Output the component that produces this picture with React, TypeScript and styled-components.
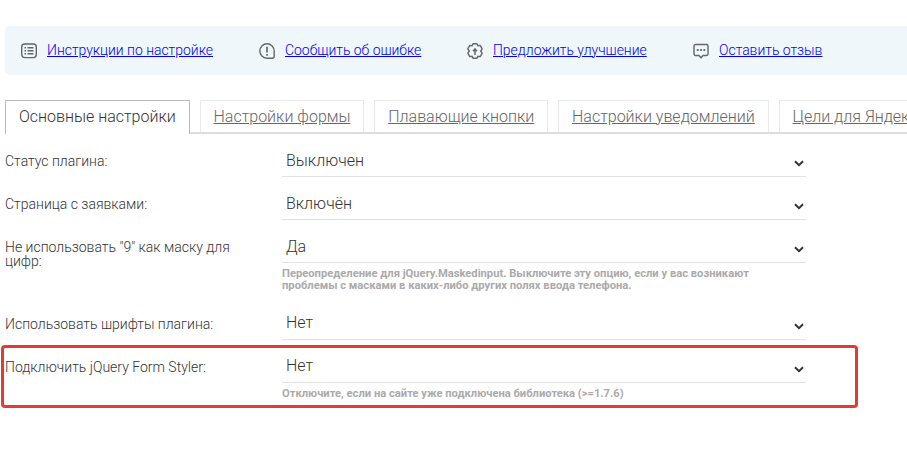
import React from "react";
import styled, { createGlobalStyle } from "styled-components";

const Global = createGlobalStyle`
  html, body { margin: 0; padding: 0; background: #fff; }
  body { font-family: Roboto, "Liberation Sans", sans-serif; width: 907px; height: 463px; overflow: hidden; }
`;
const Page = styled.div`
  width: 907px; height: 463px; overflow: hidden; padding: 26px 0 0 5px; box-sizing: border-box;
`;
const Notice = styled.div`
  display: flex; align-items: center; height: 49px; width: 920px; box-sizing: border-box;
  background: #eff7fb; border-radius: 5px; padding-left: 16px;
`;
const NoticeItem = styled.div<{ $w: number }>`
  display: flex; align-items: center; gap: 10px; width: ${p => p.$w}px; flex: none;
`;
const NoticeLink = styled.a`
  font-size: 13.95px; font-weight: 300; color: #0000ee; text-decoration: underline; position: relative; top: -1px;
`;
const IconBox = styled.svg`
  width: 16px; height: 16px; flex: none; color: #666;
`;
const Tabs = styled.div`
  display: flex; gap: 9.75px; margin-top: 25px; height: 34px; width: 902px; box-sizing: border-box;
  border-bottom: 2px solid #ddd; position: relative;
`;
const Tab = styled.a<{ $active?: boolean }>`
  flex: none; box-sizing: border-box; height: 32px; padding: 0 13px 1px; display: flex; align-items: center;
  font-size: 16px; font-weight: 300; color: ${p => (p.$active ? "#333" : "#666")};
  text-decoration: ${p => (p.$active ? "none" : "underline")}; white-space: nowrap;
  border: 1px solid ${p => (p.$active ? "#bbb" : "#eaeaea")}; border-bottom: 0;
  background: #fff; ${p => p.$active && "height: 34px; padding-bottom: 3px; z-index: 1;"}
`;
const Form = styled.div`
  display: flex; flex-direction: column; padding-top: 10px;
`;
const Row = styled.div<{ $hint?: number; $boxed?: boolean }>`
  display: grid; grid-template-columns: 277px 524px; position: relative;
  padding-bottom: ${p => p.$hint ?? 10}px;
  ${p => p.$boxed && `
    &::after {
      content: ""; position: absolute; left: -4px; top: -5px; width: 857px; height: 63px;
      border: 3px solid #e53a2e; border-radius: 4px; box-sizing: border-box; pointer-events: none;
    }
  `}
`;
const Label = styled.label`
  font-size: 14px; font-weight: 300; color: #333; line-height: 14px; padding-top: 10px; padding-right: 30px;
`;
const Field = styled.div`display: flex; flex-direction: column;`;
const Select = styled.div<{ $lift?: boolean }>`
  display: flex; align-items: center; justify-content: space-between; height: 33px; box-sizing: border-box;
  border-bottom: 1px solid #e2e2e2; padding: 0 2px ${p => (p.$lift ? 2 : 0)}px 4px; font-size: 16px; font-weight: 300; color: #333;
`;
const Hint = styled.div`
  font-size: 11.2px; font-weight: 700; line-height: 12px; color: #aaa; padding-top: 5px; width: 490px;
`;
const ChevronMark = styled.svg<{ $lift?: boolean }>`
  width: 10px; height: 7px; margin-top: ${p => (p.$lift ? 9 : 7)}px; flex: none;
`;
const Chevron = ({ lift }: { lift?: boolean }) => (
  <ChevronMark $lift={lift} viewBox="0 0 10 7">
    <path d="M1 1.2 5 5.2 9 1.2" fill="none" stroke="#333" strokeWidth="2" />
  </ChevronMark>
);

const ListIcon = () => (
  <IconBox viewBox="0 0 16 16" fill="none" stroke="currentColor" strokeWidth="1.4">
    <rect x="0.7" y="1" width="14.6" height="13.6" rx="3" />
    <path d="M3.500 4.800h1.500M3.500 7.800h1.500M3.500 10.800h1.500M6.500 4.800h6M6.500 7.800h6M6.500 10.800h6" strokeWidth="1.4" />
  </IconBox>
);
const AlertIcon = () => (
  <IconBox viewBox="0 0 16 16" fill="none" stroke="currentColor" strokeWidth="1.4">
    <path d="M8 .8a7.200 7.200 0 1 0 0 14.400h5.200a2 2 0 0 0 2-2V8A7.200 7.200 0 0 0 8 .8z" />
    <path d="M8 3.800v5.600M8 11v1.800" strokeWidth="1.700" />
  </IconBox>
);
const GearIcon = () => (
  <IconBox viewBox="0 0 16 16" fill="none" stroke="currentColor" strokeWidth="1.4">
    <path d="M6 .8h4l.8 2 2.400-.4 2 3.400-1.500 2.200 1.500 2.200-2 3.400-2.400-.4-.8 2H6l-.8-2-2.400.4-2-3.400 1.500-2.200L.8 5.800l2-3.400 2.400.4z" strokeLinejoin="round" />
    <path d="M8 12V6.500M6 8.200 8 5.800l2 2.400" strokeWidth="1.500" />
  </IconBox>
);
const ChatIcon = () => (
  <IconBox viewBox="0 0 16 16" fill="none" stroke="currentColor" strokeWidth="1.4">
    <path d="M2.500 1.500h11A1.500 1.500 0 0 1 15 3v8a1.500 1.500 0 0 1-1.500 1.500H10l-2 2.200-2-2.200H2.500A1.500 1.500 0 0 1 1 11V3a1.500 1.500 0 0 1 1.500-1.500z" strokeLinejoin="round" />
    <path d="M3.800 7h1.800M7.100 7h1.800M10.400 7h1.800" strokeWidth="2" />
  </IconBox>
);

export default function App() {
  return (
    <Page>
      <Global />
      <Notice>
        <NoticeItem $w={238}><ListIcon /><NoticeLink href="#">Инструкции по настройке</NoticeLink></NoticeItem>
        <NoticeItem $w={208}><AlertIcon /><NoticeLink href="#">Сообщить об ошибке</NoticeLink></NoticeItem>
        <NoticeItem $w={226}><GearIcon /><NoticeLink href="#">Предложить улучшение</NoticeLink></NoticeItem>
        <NoticeItem $w={160}><ChatIcon /><NoticeLink href="#">Оставить отзыв</NoticeLink></NoticeItem>
      </Notice>
      <Tabs>
        <Tab $active>Основные настройки</Tab>
        <Tab href="#">Настройки формы</Tab>
        <Tab href="#">Плавающие кнопки</Tab>
        <Tab href="#">Настройки уведомлений</Tab>
        <Tab href="#">Цели для Яндекс.Метрики</Tab>
      </Tabs>
      <Form>
        <Row><Label>Статус плагина:</Label><Field><Select>Выключен<Chevron /></Select></Field></Row>
        <Row><Label>Страница с заявками:</Label><Field><Select>Включён<Chevron /></Select></Field></Row>
        <Row $hint={15}>
          <Label>Не использовать "9" как маску для цифр:</Label>
          <Field>
            <Select>Да<Chevron /></Select>
            <Hint>Переопределение для jQuery.Maskedinput. Выключите эту опцию, если у вас возникают проблемы с масками в каких-либо других полях ввода телефона.</Hint>
          </Field>
        </Row>
        <Row><Label>Использовать шрифты плагина:</Label><Field><Select $lift>Нет<Chevron lift /></Select></Field></Row>
        <Row $boxed>
          <Label>Подключить jQuery Form Styler:</Label>
          <Field>
            <Select $lift>Нет<Chevron lift /></Select>
            <Hint>Отключите, если на сайте уже подключена библиотека (&gt;=1.7.6)</Hint>
          </Field>
        </Row>
      </Form>
    </Page>
  );
}
